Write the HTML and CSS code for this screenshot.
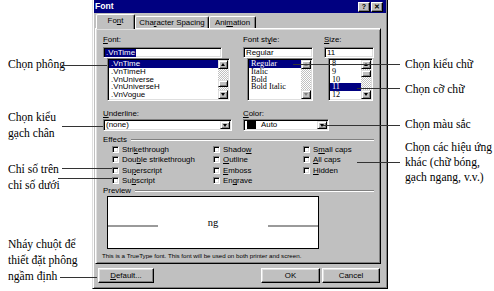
FILE: index.html
```html
<!DOCTYPE html>
<html lang="vi">
<head>
<meta charset="utf-8">
<title>Font</title>
<link rel="stylesheet" href="styles.css">
</head>
<body>
<div class="canvas">
  <div class="dialog">
    <div class="titlebar">
      <span class="title">Font</span>
      <span class="tbtn">?</span>
      <span class="tbtn x">✕</span>
    </div>
    <div class="tabs">
      <div class="tab t-font active">Fo<u>n</u>t</div>
      <div class="tab t-char">Cha<u>r</u>acter Spacing</div>
      <div class="tab t-anim">Ani<u>m</u>ation</div>
    </div>
    <div class="panel">
      <div class="top">
        <div class="col c-font">
          <div class="lbl"><u>F</u>ont:</div>
          <div class="field"><span class="hl">.VnTime</span></div>
          <div class="list">
            <div class="items">
              <div class="item sel">.VnTime</div>
              <div class="item">.VnTimeH</div>
              <div class="item">.VnUniverse</div>
              <div class="item">.VnUniverseH</div>
              <div class="item">.VnVogue</div>
            </div>
            <div class="sbar">
              <div class="arrow up"></div>
              <div class="track"><div class="thumb th-font"></div></div>
              <div class="arrow down"></div>
            </div>
          </div>
        </div>
        <div class="col c-style">
          <div class="lbl">Font st<u>y</u>le:</div>
          <div class="field">Regular</div>
          <div class="list">
            <div class="items serif">
              <div class="item sel">Regular</div>
              <div class="item">Italic</div>
              <div class="item">Bold</div>
              <div class="item">Bold Italic</div>
            </div>
            <div class="sbar">
              <div class="arrow up off"></div>
              <div class="track"></div>
              <div class="arrow down off"></div>
            </div>
          </div>
        </div>
        <div class="col c-size">
          <div class="lbl"><u>S</u>ize:</div>
          <div class="field">11</div>
          <div class="list">
            <div class="items serif">
              <div class="item">8</div>
              <div class="item">9</div>
              <div class="item">10</div>
              <div class="item sel">11</div>
              <div class="item">12</div>
            </div>
            <div class="sbar">
              <div class="arrow up"></div>
              <div class="track"><div class="thumb th-size"></div></div>
              <div class="arrow down"></div>
            </div>
          </div>
        </div>
      </div>

      <div class="row2">
        <div class="col c-under">
          <div class="lbl"><u>U</u>nderline:</div>
          <div class="dd"><span class="ddtext">(none)</span><span class="ddbtn"></span></div>
        </div>
        <div class="col c-color">
          <div class="lbl"><u>C</u>olor:</div>
          <div class="dd"><span class="swatch"></span><span class="ddtext">Auto</span><span class="ddbtn"></span></div>
        </div>
      </div>

      <div class="group g-effects">Effects<span class="etch"></span></div>
      <div class="checks">
        <div class="chk"><span class="box"></span>Stri<u>k</u>ethrough</div>
        <div class="chk"><span class="box"></span>Shado<u>w</u></div>
        <div class="chk"><span class="box"></span>S<u>m</u>all caps</div>
        <div class="chk"><span class="box"></span>Dou<u>b</u>le strikethrough</div>
        <div class="chk"><span class="box"></span><u>O</u>utline</div>
        <div class="chk"><span class="box"></span><u>A</u>ll caps</div>
        <div class="chk"><span class="box"></span>Su<u>p</u>erscript</div>
        <div class="chk"><span class="box"></span><u>E</u>mboss</div>
        <div class="chk"><span class="box"></span><u>H</u>idden</div>
        <div class="chk"><span class="box"></span>Su<u>b</u>script</div>
        <div class="chk"><span class="box"></span>En<u>g</u>rave</div>
      </div>

      <div class="group">Preview<span class="etch"></span></div>
      <div class="preview">
        <span class="pline"></span>
        <span class="ptext">ng</span>
        <span class="pline"></span>
      </div>
      <div class="tt">This is a TrueType font. This font will be used on both printer and screen.</div>
    </div>
    <div class="buttons">
      <div class="btn b-def"><u>D</u>efault...</div>
      <div class="btn b-ok">OK</div>
      <div class="btn b-cancel">Cancel</div>
    </div>
  </div>

  <div class="ann a-phong">Chọn phông</div>
  <div class="ann a-gach">Chọn kiểu<br>gạch chân</div>
  <div class="ann a-chiso">Chỉ số trên<br>chỉ số dưới</div>
  <div class="ann a-def">Nháy chuột để<br>thiết đặt phông<br>ngầm định</div>

  <div class="ann r a-kieu">Chọn kiểu chữ</div>
  <div class="ann r a-co">Chọn cỡ chữ</div>
  <div class="ann r a-mau">Chọn màu sắc</div>
  <div class="ann r a-hieu">Chọn các hiệu ứng<br>khác (chữ bóng,<br>gạch ngang, v.v.)</div>

  <span class="ln l1"></span>
  <span class="ln l2"></span>
  <span class="ln l3"></span>
  <span class="ln l4"></span>
  <span class="ln l5"></span>
  <span class="ln r1"></span>
  <span class="ln r2"></span>
  <span class="ln r3"></span>
  <span class="ln r4"></span>
</div>
</body>
</html>
```

FILE: styles.css
```css
* { box-sizing: border-box; margin: 0; padding: 0; }
html, body { width: 494px; height: 291px; overflow: hidden; background: #fff; }
body { font-family: "Liberation Sans", Arial, sans-serif; color: #000; }
u { text-decoration: underline; text-underline-offset: 1px; }

.canvas { position: relative; width: 494px; height: 291px; }

/* ---------- dialog window ---------- */
.dialog {
  position: absolute; left: 92px; top: -2px;
  width: 296px; height: 291px;
  background: #c0c0c0;
  border: 1px solid; border-color: #dfdfdf #000 #000 #dfdfdf;
  box-shadow: inset 1px 1px #fff, inset -1px -1px #808080;
  padding: 1px;
  font-size: 7.9px;
  display: flex; flex-direction: column;
}

.titlebar {
  height: 13px; flex: none;
  background: #000080;
  display: flex; align-items: center;
  padding: 0 3px 0 1px;
  gap: 1px;
}
.title { flex: 1; color: #fff; font-weight: bold; font-size: 8.6px; line-height: 13px; }
.tbtn {
  width: 12px; height: 10px;
  background: #c0c0c0;
  border: 1px solid; border-color: #fff #000 #000 #fff;
  box-shadow: inset -1px -1px #808080;
  font-size: 7px; font-weight: bold; line-height: 8px; text-align: center;
}

.tabs {
  height: 15px; flex: none;
  display: flex; align-items: flex-end;
  padding-left: 2px;
}
.tab {
  height: 12px;
  border: 1px solid; border-bottom: none;
  border-color: #fff #000 #000 #fff;
  box-shadow: inset -1px 0 #808080;
  border-radius: 2px 2px 0 0;
  display: flex; align-items: center; justify-content: center;
  line-height: 10px;
}
.tab.active {
  height: 15px; margin-bottom: -1px;
  background: #c0c0c0; position: relative; z-index: 2;
  padding-bottom: 2px;
}
.t-font { width: 39px; }
.t-char { width: 74px; }
.t-anim { width: 47px; }

.panel {
  flex: none;
  margin-left: 1px;
  width: 286px; height: 236px;
  border: 1px solid; border-color: #fff #000 #000 #fff;
  box-shadow: inset 1px 1px #dfdfdf, inset -1px -1px #808080;
  padding: 6px 6px 0 7px;
  display: flex; flex-direction: column;
}

.top, .row2 { display: flex; }
.col { display: flex; flex-direction: column; }
.c-font { width: 127px; }
.c-style { width: 70px; margin-left: 13px; }
.c-size { width: 50px; margin-left: 11px; }
.lbl { height: 9px; line-height: 9px; margin-bottom: 3px; white-space: nowrap; }

.field, .list, .dd, .box {
  background: #fff;
  border: 1px solid; border-color: #808080 #fff #fff #808080;
  box-shadow: inset 1px 1px #000, inset -1px -1px #dfdfdf;
}
.field { height: 11px; padding: 1px 2px 0 2px; line-height: 8px; white-space: nowrap; }
.c-font .field { width: 119px; padding-left: 1px; }
.hl { background: #000080; color: #fff; padding: 0 1px; display: inline-block; line-height: 8px; }

.list { height: 43px; margin-left: 4px; display: flex; }
.c-font .list { width: 123px; }
.c-style .list { width: 66px; }
.c-size .list { width: 45px; }
.items { flex: 1; padding: 1px 0 0 1px; min-width: 0; }
.items.serif { font-family: "Liberation Serif", "Times New Roman", serif; font-size: 8.2px; }
.item { height: 7.8px; line-height: 7.8px; padding-left: 2px; white-space: nowrap; }
.item.sel { background: #000080; color: #fff; }

.sbar { width: 10px; margin: 1px 1px 1px 0; display: flex; flex-direction: column; }
.arrow {
  height: 9px; flex: none;
  background: #c0c0c0;
  border: 1px solid; border-color: #dfdfdf #000 #000 #dfdfdf;
  box-shadow: inset 1px 1px #fff, inset -1px -1px #808080;
  display: flex; align-items: center; justify-content: center;
}
.arrow::before {
  content: ""; width: 0; height: 0;
  border-left: 2.5px solid transparent; border-right: 2.5px solid transparent;
}
.arrow.up::before { border-bottom: 3px solid #000; }
.arrow.down::before { border-top: 3px solid #000; }
.arrow.off.up::before { border-bottom-color: #808080; }
.arrow.off.down::before { border-top-color: #808080; }
.track {
  flex: 1;
  background: repeating-conic-gradient(#fff 0 25%, #c0c0c0 0 50%) 0 0 / 2px 2px;
  display: flex; flex-direction: column;
}
.thumb {
  height: 7px;
  background: #c0c0c0;
  border: 1px solid; border-color: #dfdfdf #000 #000 #dfdfdf;
  box-shadow: inset 1px 1px #fff, inset -1px -1px #808080;
}
.th-font { margin-top: 11px; }
.th-size { margin-top: 1px; }

.row2 { margin-top: 8px; }
.row2 .lbl { margin-bottom: 1px; }
.c-under { width: 129px; }
.c-color { width: 86px; margin-left: 11px; }
.dd { height: 12px; display: flex; align-items: center; padding: 2px 1px 2px 2px; }
.ddtext { flex: 1; line-height: 8px; }
.ddbtn {
  width: 10px; height: 8px;
  background: #c0c0c0;
  border: 1px solid; border-color: #dfdfdf #000 #000 #dfdfdf;
  box-shadow: inset 1px 1px #fff, inset -1px -1px #808080;
  display: flex; align-items: center; justify-content: center;
}
.ddbtn::before {
  content: ""; width: 0; height: 0;
  border-left: 2.5px solid transparent; border-right: 2.5px solid transparent;
  border-top: 3px solid #000;
}
.swatch { width: 9px; height: 8px; background: #000; margin: 0 5px 0 1px; }

.group {
  height: 9px; line-height: 9px;
  display: flex; align-items: center;
}
.g-effects { margin-top: 4px; }
.etch { flex: 1; height: 2px; margin-left: 4px; border-top: 1px solid #808080; border-bottom: 1px solid #fff; }

.checks {
  display: grid;
  grid-template-columns: 101px 90px 1fr;
  grid-auto-rows: 10.5px;
  padding-left: 9px;
}
.chk { display: flex; align-items: center; white-space: nowrap; line-height: 9px; }
.box { width: 7px; height: 7px; margin-right: 3px; flex: none; }

.preview {
  margin: 1px 0 0 4px;
  width: 212px; height: 53px;
  background: #fff; border: 1px solid #000;
  display: flex; align-items: center; justify-content: space-between;
}
.pline { width: 50px; height: 2px; background: #9a9a9a; margin-top: 6px; }
.ptext { font-family: "Liberation Serif", "Times New Roman", serif; font-size: 10.5px; line-height: 10px; }

.tt { margin: 3px 0 0 -1px; height: 8px; line-height: 8px; font-size: 6.2px; white-space: nowrap; }

.buttons { height: 15px; margin-top: 4px; display: flex; flex: none; }
.btn {
  height: 15px;
  background: #c0c0c0;
  border: 1px solid; border-color: #fff #000 #000 #fff;
  box-shadow: inset -1px -1px #808080, inset 1px 1px #dfdfdf;
  display: flex; align-items: center; justify-content: center;
  line-height: 9px;
}
.b-def { width: 56px; margin-left: 4px; }
.b-ok { width: 59px; margin-left: auto; }
.b-cancel { width: 58px; margin-left: 2px; margin-right: 6px; }

/* ---------- callouts ---------- */
.ann {
  position: absolute;
  font-family: "Liberation Serif", "Times New Roman", serif;
  font-size: 11.6px; line-height: 16px;
  white-space: nowrap;
  left: 8px;
}
.ann.r { left: 405px; line-height: 15px; }
.a-phong { top: 57px; }
.a-gach { top: 110px; }
.a-chiso { top: 162px; }
.a-def { top: 237px; }
.a-kieu { top: 57px; }
.a-co { top: 82px; }
.a-mau { top: 117px; }
.a-hieu { top: 140px; }

.ln { position: absolute; height: 1px; background: #333; z-index: 5; }
.l1 { left: 62px; width: 45px; top: 65px; }
.l2 { left: 62px; width: 41px; top: 126px; }
.l3 { left: 62px; width: 50px; top: 168px; }
.l4 { left: 58px; width: 54px; top: 178px; }
.l5 { left: 60px; width: 37px; top: 277px; }
.r1 { left: 293px; width: 107px; top: 64px; }
.r2 { left: 357px; width: 43px; top: 88px; }
.r3 { left: 323px; width: 77px; top: 125px; }
.r4 { left: 357px; width: 43px; top: 162px; }
```
